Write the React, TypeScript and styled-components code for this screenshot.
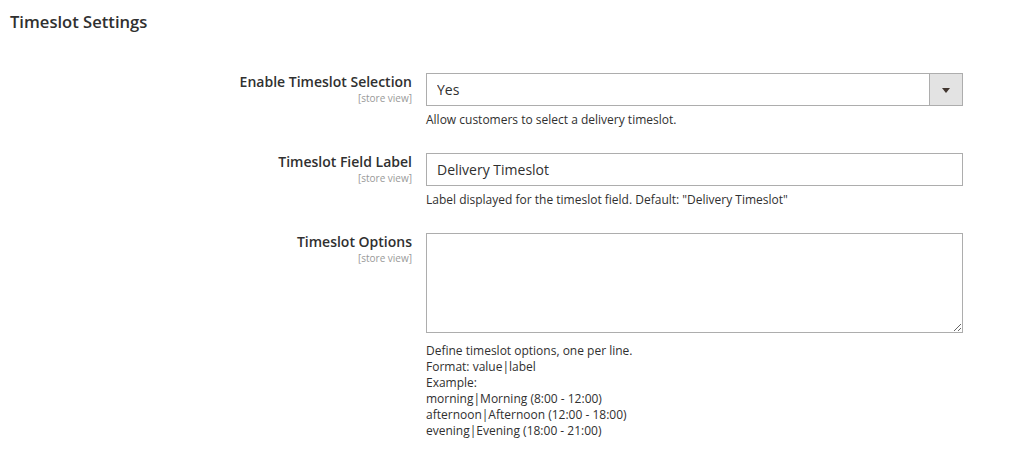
import styled, { createGlobalStyle } from "styled-components";

const GlobalStyle = createGlobalStyle`
  body {
    margin: 0;
    background: #fff;
    font-family: "Open Sans", "Liberation Sans", sans-serif;
    color: #303030;
  }
`;

const Page = styled.div`
  padding: 11px 0 0 0;
`;

const Title = styled.h2`
  margin: 0 0 40px 10px;
  font-size: 16.6px;
  line-height: 22px;
  font-weight: 600;
  color: #303030;
`;

const Fields = styled.div`
  display: flex;
  flex-direction: column;
  gap: 25px;
`;

const Row = styled.div`
  display: grid;
  grid-template-columns: 412px 537px;
  column-gap: 14px;
  align-items: start;
`;

const LabelCol = styled.div`
  text-align: right;
  padding-top: 0;
`;

const Label = styled.label`
  display: block;
  font-size: 14px;
  line-height: 18px;
  font-weight: 600;
  color: #303030;
`;

const Scope = styled.span`
  display: block;
  font-size: 10px;
  line-height: 14px;
  color: #999;
`;

const Control = styled.div`
  display: flex;
  flex-direction: column;
`;

const SelectWrap = styled.div`
  position: relative;
  height: 33px;
`;

const Select = styled.select`
  appearance: none;
  width: 100%;
  height: 33px;
  box-sizing: border-box;
  border: 1px solid #adadad;
  border-radius: 0;
  background: #fff;
  padding: 0 40px 0 10px;
  font-family: inherit;
  font-size: 14px;
  color: #303030;
  outline: none;
`;

const Arrow = styled.span`
  position: absolute;
  top: 0;
  right: 0;
  width: 34px;
  height: 33px;
  box-sizing: border-box;
  border: 1px solid #adadad;
  background: #e3e3e3;
  display: flex;
  align-items: center;
  justify-content: center;
  pointer-events: none;

  &::after {
    content: "";
    border-left: 4px solid transparent;
    border-right: 4px solid transparent;
    border-top: 5px solid #41362f;
    margin-top: 1px;
  }
`;

const Input = styled.input`
  width: 100%;
  height: 33px;
  box-sizing: border-box;
  border: 1px solid #adadad;
  border-radius: 0;
  padding: 0 10px;
  font-family: inherit;
  font-size: 14px;
  color: #303030;
  outline: none;
`;

const TextArea = styled.textarea`
  display: block;
  width: 100%;
  height: 100px;
  box-sizing: border-box;
  border: 1px solid #adadad;
  border-radius: 0;
  padding: 6px 10px;
  font-family: inherit;
  font-size: 14px;
  color: #303030;
  outline: none;
  margin-bottom: 4px;
`;

const Note = styled.div`
  margin-top: 6px;
  font-size: 12px;
  line-height: 16px;
  color: #303030;
`;

export default function App() {
  return (
    <Page>
      <GlobalStyle />
      <Title>Timeslot Settings</Title>
      <Fields>
        <Row>
          <LabelCol>
            <Label>Enable Timeslot Selection</Label>
            <Scope>[store view]</Scope>
          </LabelCol>
          <Control>
            <SelectWrap>
              <Select defaultValue="1">
                <option value="1">Yes</option>
                <option value="0">No</option>
              </Select>
              <Arrow />
            </SelectWrap>
            <Note>Allow customers to select a delivery timeslot.</Note>
          </Control>
        </Row>
        <Row>
          <LabelCol>
            <Label>Timeslot Field Label</Label>
            <Scope>[store view]</Scope>
          </LabelCol>
          <Control>
            <Input defaultValue="Delivery Timeslot" />
            <Note>Label displayed for the timeslot field. Default: "Delivery Timeslot"</Note>
          </Control>
        </Row>
        <Row>
          <LabelCol>
            <Label>Timeslot Options</Label>
            <Scope>[store view]</Scope>
          </LabelCol>
          <Control>
            <TextArea />
            <Note>
              Define timeslot options, one per line.
              <br />
              Format: value|label
              <br />
              Example:
              <br />
              morning|Morning (8:00 - 12:00)
              <br />
              afternoon|Afternoon (12:00 - 18:00)
              <br />
              evening|Evening (18:00 - 21:00)
            </Note>
          </Control>
        </Row>
      </Fields>
    </Page>
  );
}
